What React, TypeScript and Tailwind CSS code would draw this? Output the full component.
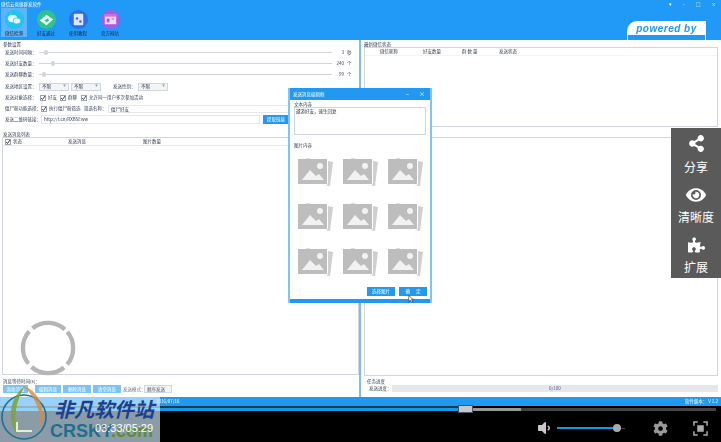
import React from 'react';
import { FaShareAlt, FaEye, FaPuzzlePiece, FaCog, FaVolumeDown } from 'react-icons/fa';

const ToolGlyph = ({ index }: { index: number }) => {
  if (index === 0) {
    return (
      <svg viewBox="0 0 20 20" className="h-[19px] w-[19px]" fill="#e8fbff">
        <ellipse cx="8" cy="9" rx="5" ry="4" />
        <ellipse cx="12.5" cy="11.5" rx="4" ry="3.2" stroke="#22c3ee" strokeWidth=".8" />
      </svg>
    );
  }
  if (index === 1) {
    return (
      <svg viewBox="0 0 20 20" className="h-[19px] w-[19px]">
        <path d="M3 11l7-6 7 5-7 6z" fill="#e6fff2" />
        <path d="M8 11l3-2 2 2-3 2z" fill="#2fc48d" />
      </svg>
    );
  }
  if (index === 2) {
    return (
      <svg viewBox="0 0 20 20" className="h-[19px] w-[19px]">
        <rect x="5" y="4" width="10" height="12" rx="1" fill="#dce8ff" />
        <circle cx="8.5" cy="9" r="1.3" fill="#2f6de8" />
        <circle cx="12" cy="12" r="1.3" fill="#2f6de8" />
      </svg>
    );
  }
  return (
    <svg viewBox="0 0 20 20" className="h-[19px] w-[19px]">
      <rect x="4" y="5" width="12" height="10" fill="#f3dcff" />
      <rect x="4" y="5" width="12" height="2" fill="#e46bb0" />
      <rect x="6" y="9" width="3" height="4" fill="#a45be8" />
      <rect x="11" y="9" width="3" height="1" fill="#a45be8" />
    </svg>
  );
};

const tools = [
  { label: '微信检测', bg: 'bg-[#22c3ee]', active: true },
  { label: '好友通过', bg: 'bg-[#2fc48d]', active: false },
  { label: '使用教程', bg: 'bg-[#2f6de8]', active: false },
  { label: '官方网站', bg: 'bg-[#a45be8]', active: false },
];

const Check = ({ label, className = '' }: { label: string; className?: string }) => (
  <span className={`flex items-center gap-[2px] whitespace-nowrap ${className}`}>
    <svg viewBox="0 0 6 6" className="h-[6px] w-[6px] shrink-0">
      <rect x=".5" y=".5" width="5" height="5" fill="#fff" stroke="#9ca3af" />
      <path d="M1.2 3l1.3 1.5L5 1" fill="none" stroke="#374151" strokeWidth="1" />
    </svg>
    {label}
  </span>
);

const Select = ({ className = '' }: { className?: string }) => (
  <span className={`flex h-[8px] w-[30px] items-center justify-between border border-gray-300 bg-gray-100 px-[2px] ${className}`}>
    不限<span className="text-[3px] text-gray-400">▼</span>
  </span>
);

const SliderRow = ({ label, pos, value, unit }: { label: string; pos: string; value: string; unit: string }) => (
  <div className="flex h-[11px] items-center pl-[5px] whitespace-nowrap">
    <span className="w-[34px] shrink-0">{label}</span>
    <div className="relative h-[1px] w-[293px] shrink-0 bg-gray-300">
      <span className={`absolute top-[-2px] h-[5px] w-[4px] rounded-sm bg-gray-300 ${pos}`} />
    </div>
    <span className="w-[12px] shrink-0 text-right">{value}</span>
    <span className="shrink-0 pl-[3px]">{unit}</span>
  </div>
);

const PictureIcon = () => (
  <svg viewBox="0 0 35 28" className="h-[28px] w-[35px]">
    <rect x="8" y="0" width="4" height="1" fill="#dedede" />
    <path d="M30 3l5 1-3 24-6-1h3l1-2z" fill="#cfcfcf" />
    <rect x="0" y="1" width="29" height="25" fill="#bdbdbd" />
    <circle cx="22" cy="8" r="3" fill="#f2f2f2" />
    <path d="M4 22l8-10 6 6 3-2 5 6z" fill="#f2f2f2" />
  </svg>
);

const Dialog = () => (
  <div className="absolute top-[88px] left-[288px] flex h-[215px] w-[144px] flex-col border-x-2 border-[#7fc4f5] bg-white text-gray-700 blur-[0.4px]">
    <div className="flex h-[12px] shrink-0 items-center justify-between bg-[#2199f0] pl-[3px] pr-[5px] text-white">
      发送消息编辑框
      <span className="flex gap-[10px] text-[6px] leading-none"><span>–</span><span>×</span></span>
    </div>
    <div className="h-[7px] shrink-0 px-[4px] leading-[8px]">文本内容</div>
    <div className="mx-[4px] h-[28px] shrink-0 border border-gray-300 px-[1px] leading-[6px] text-gray-800">遨游好友，速生回复</div>
    <div className="mt-[7px] h-[6px] shrink-0 px-[4px] leading-[6px]">图片内容</div>
    <div className="mx-[4px] grid min-h-0 flex-1 grid-cols-[repeat(3,45px)] content-start gap-y-[17px] pt-[10px] pl-[4px]">
      {Array.from({ length: 9 }).map((_, i) => (
        <PictureIcon key={i} />
      ))}
    </div>
    <div className="flex h-[12px] shrink-0 items-start justify-end gap-[4px] pr-[3px] text-white">
      <span className="flex h-[9px] w-[28px] items-center justify-center bg-[#2199f0]">选择图片</span>
      <span className="flex h-[9px] w-[28px] items-center justify-center gap-[6px] bg-[#2199f0]">
        <span>确</span><span>定</span>
      </span>
    </div>
    <div className="h-[4px] shrink-0 bg-[#2199f0]" />
  </div>
);

const Cursor = () => (
  <svg viewBox="0 0 10 14" className="absolute top-[295px] left-[408px] h-[8px] w-[6px]">
    <path d="M1 1v10l3-2 2 4 2-1-2-4h3z" fill="#fff" stroke="#222" strokeWidth="1" />
  </svg>
);

const LeftPanel = () => (
  <div className="flex w-[359px] shrink-0 flex-col whitespace-nowrap">
    <div className="h-[7px] pl-[3px] leading-[8px]">参数设置</div>
    <SliderRow label="发送时间间隔：" pos="left-[5px]" value="3" unit="秒" />
    <SliderRow label="发送好友数量：" pos="left-[12px]" value="240" unit="个" />
    <SliderRow label="发送群聊数量：" pos="left-[3px]" value="99" unit="个" />
    <div className="mt-[1px] flex h-[11px] items-center pl-[5px]">
      <span className="w-[34px]">发送地区设置：</span>
      <Select />
      <Select className="ml-[2px]" />
      <span className="ml-[12px] w-[25px]">发送性别：</span>
      <Select />
    </div>
    <div className="flex h-[11px] items-center pl-[5px]">
      <span className="w-[35px]">发送对象选择：</span>
      <Check label="好友" className="w-[20px]" />
      <Check label="群聊" className="w-[21px]" />
      <Check label="允许同一用户多次参加活动" />
    </div>
    <div className="flex h-[11px] items-center pl-[5px]">
      <span className="w-[36px]">僵尸粉功能选择：</span>
      <Check label="执行僵尸粉筛选" className="w-[43px]" />
      <span className="w-[24px]">筛选名称：</span>
      <span className="h-[8px] w-[181px] border border-gray-200 pl-[2px] leading-[6px]">僵尸好友</span>
    </div>
    <div className="flex h-[11px] items-center pl-[5px]">
      <span className="w-[36px]">发送二维码链接：</span>
      <span className="h-[9px] w-[219px] border border-gray-200 pl-[2px] leading-[7px]">http://t.cn/RXB5Eww</span>
      <span className="ml-[3px] flex h-[9px] w-[26px] items-center justify-center bg-[#2199f0] text-white">提取链接</span>
    </div>
    <div className="mt-[6px] h-[6px] pl-[3px] leading-[6px]">发送消息列表</div>
    <div className="ml-[2px] flex min-h-0 flex-1 flex-col border border-gray-300">
      <div className="flex h-[8px] shrink-0 items-center border-b border-gray-200 pl-[2px]">
        <span className="w-[63px]"><Check label="状态" /></span>
        <span className="w-[75px]">发送消息</span>
        <span>图片数量</span>
      </div>
    </div>
    <div className="h-[6px] pl-[3px] mt-[3px] leading-[6px]">消息等待时间(s)：</div>
    <div className="mt-[1px] mb-[4px] flex h-[8px] items-center pl-[3px] text-white">
      <span className="flex h-[8px] w-[25px] items-center justify-center bg-[#7cc2f5]">添加消息</span>
      <span className="ml-[7px] flex h-[8px] w-[26px] items-center justify-center bg-[#7cc2f5]">编辑消息</span>
      <span className="ml-[2px] flex h-[8px] w-[28px] items-center justify-center bg-[#7cc2f5]">删除消息</span>
      <span className="ml-[2px] flex h-[8px] w-[28px] items-center justify-center bg-[#7cc2f5]">清空消息</span>
      <span className="ml-[2px] w-[21px] text-gray-500">发送模式：</span>
      <span className="flex h-[8px] w-[28px] items-center border border-gray-300 bg-gray-100 pl-[2px] text-gray-600">顺序发送</span>
    </div>
  </div>
);

const RightPanel = () => (
  <div className="flex min-w-0 flex-1 flex-col border-l-2 border-[#7dbdec] pr-[3px] pl-[3px] whitespace-nowrap">
    <div className="h-[7px] leading-[8px]">最新微信状态</div>
    <div className="h-[80px] shrink-0 border border-gray-300">
      <div className="flex h-[8px] items-center border-b border-gray-100 pl-[15px]">
        <span className="w-[43px]">微信昵称</span>
        <span className="w-[39px]">好友数量</span>
        <span className="w-[37px]">群 数 量</span>
        <span>发送状态</span>
      </div>
    </div>
    <div className="mt-[10px] min-h-0 flex-1 border border-gray-300" />
    <div className="h-[6px] pl-[3px] mt-[2px] leading-[6px]">任务进度</div>
    <div className="mb-[4px] flex h-[9px] items-center pl-[5px]">
      <span className="w-[23px]">发送进度：</span>
      <div className="flex h-[7px] flex-1 items-center justify-center bg-gray-200 text-[#555a8a]">0/100</div>
    </div>
  </div>
);

const Watermark = () => (
  <div className="absolute top-[397px] left-0 h-[45px] w-[160px] bg-[#d8f0ff]/65">
    <svg viewBox="0 0 47 55" className="absolute top-[-12px] left-[1px] h-[55px] w-[47px]">
      <circle cx="23" cy="32" r="22" fill="none" stroke="#1d6f9c" strokeWidth="1.6" />
      <path d="M24 1C8 12 6 36 16 49 12 32 15 15 24 1z" fill="#7ba23a" opacity=".85" />
      <path d="M22 1c16 4 25 26 17 42C41 28 34 11 22 1z" fill="#d98b37" opacity=".8" />
      <path d="M16 37v9h15" fill="none" stroke="#e6f0d8" strokeWidth="2" />
    </svg>
    <span className="absolute top-0 left-[54px] whitespace-nowrap text-[20px] leading-[24px] font-bold text-[#1d3f8f] italic">非凡软件站</span>
    <span className="absolute top-[22px] left-[50px] font-['Liberation_Sans',sans-serif] text-[18px] leading-[24px] font-bold whitespace-nowrap text-[#1d6f8f]">
      CRSKY<span className="text-[#5f8a3c]">.com</span>
    </span>
    <span className="absolute top-[24px] left-[95px] font-['Liberation_Sans',sans-serif] text-[11px] leading-[14px] whitespace-nowrap text-white">03:33/05:29</span>
  </div>
);

const SidePanel = () => (
  <div className="absolute top-[128px] left-[671px] flex h-[150px] w-[50px] flex-col items-center bg-[#5a5a5a] pt-[7px] text-[12px] text-white">
    <FaShareAlt className="h-[17px] w-[17px]" />
    <span className="mt-[7px] leading-[16px]">分享</span>
    <FaEye className="mt-[11px] h-[18px] w-[20px]" />
    <span className="mt-[5px] leading-[16px]">清晰度</span>
    <FaPuzzlePiece className="mt-[12px] h-[16px] w-[17px]" />
    <span className="mt-[6px] leading-[16px]">扩展</span>
  </div>
);

const App = () => {
  return (
    <div className="relative flex h-[442px] w-[721px] flex-col overflow-hidden bg-black font-['Noto_Sans_CJK_SC',sans-serif] text-[4.5px] text-gray-700">
      <div className="flex h-[397px] shrink-0 flex-col blur-[0.4px]">
        <div className="h-[40px] shrink-0 bg-[#2199f7] text-white">
          <div className="flex h-[8px] items-center justify-between pl-[1px] pr-[5px]">
            微信云省级群发软件
            <span className="flex gap-[11px] leading-none"><span>▾</span><span>–</span><span>□</span><span>×</span></span>
          </div>
          <div className="flex pl-[1px]">
            {tools.map((t, i) => (
              <div key={t.label} className={`mr-[6px] flex h-[29px] w-[26px] flex-col items-center justify-end pb-[1px] ${t.active ? 'bg-[#5bb5f7]' : ''}`}>
                <span className={`mb-[1px] flex h-[19px] w-[19px] items-center justify-center rounded-full ${t.bg}`}>
                  <ToolGlyph index={i} />
                </span>
                <span className="leading-[6px] text-gray-800">{t.label}</span>
              </div>
            ))}
          </div>
        </div>
        <div className="flex min-h-0 flex-1 bg-white">
          <LeftPanel />
          <RightPanel />
        </div>
      </div>
      <div className="flex h-[9px] shrink-0 items-center justify-between bg-[#2199f0] pl-[156px] pr-[3px] text-white blur-[0.3px]">
        <span>2016/07/16</span>
        <span>软件版本： V 1.2</span>
      </div>
      {/* video player bar */}
      <div className="flex h-[5px] shrink-0 flex-col">
        <div className="h-[2px] w-[458px] bg-[#1e3a4c]" />
        <div className="flex h-[3px]">
          <div className="w-[458px] bg-[#0f9be8]" />
          <div className="w-[63px] bg-[#9a9a9a]" />
          <div className="w-[195px] bg-[#444]" />
        </div>
      </div>
      <div className="flex flex-1 items-center justify-end bg-black pt-[3px] pr-[13px] text-[#c9c9c9]">
        <FaVolumeDown className="h-[16px] w-[16px]" />
        <div className="ml-[5px] h-[2px] w-[56px] bg-[#0f9be8]" />
        <span className="h-[8px] w-[8px] rounded-full bg-[#aaa]" />
        <span className="h-[1px] w-[4px] bg-[#444]" />
        <FaCog className="ml-[28px] h-[15px] w-[15px] text-[#999]" />
        <svg viewBox="0 0 16 16" className="ml-[25px] h-[15px] w-[15px] text-[#aaa]" fill="none" stroke="currentColor" strokeWidth="1.6">
          <path d="M1 5V1h4M11 1h4v4M15 11v4h-4M5 15H1v-4" />
          <rect x="4.5" y="4.5" width="7" height="7" fill="currentColor" stroke="none" />
        </svg>
      </div>

      <span className="absolute top-[405px] left-[458px] h-[8px] w-[15px] border border-gray-600 bg-[#c8c8c8]" />

      <div className="absolute top-[21px] left-[627px] w-[79px] blur-[0.3px]">
        <div className="flex h-[14px] items-center justify-center rounded-tl-[10px] bg-white font-['Liberation_Sans',sans-serif] text-[10px] font-bold tracking-[0.5px] text-[#2199f7] italic">powered by</div>
        <div className="h-[5px] border-x border-white/80" />
      </div>

      <Dialog />
      <Cursor />

      {/* loading ring */}
      <svg viewBox="0 0 60 60" className="absolute top-[320px] left-[20px] h-[58px] w-[58px] fill-none stroke-[#b5b5b5]" strokeWidth="4.5">
        <circle cx="29" cy="29" r="26" strokeDasharray="36 4.85" strokeDashoffset="-2.4" transform="rotate(-45 29 29)" />
      </svg>

      <Watermark />
      <SidePanel />
    </div>
  );
};

export default App;
